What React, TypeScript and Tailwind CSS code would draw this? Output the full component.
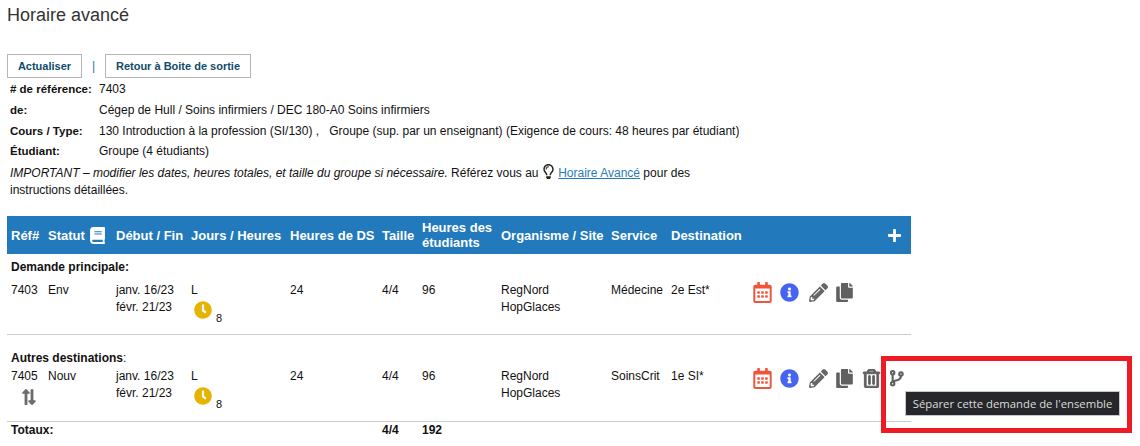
import { FaBook, FaClock, FaCopy, FaInfoCircle, FaLongArrowAltDown, FaLongArrowAltUp, FaPencilAlt, FaPlus, FaRegCalendarAlt, FaRegLightbulb, FaRegTrashAlt } from "react-icons/fa";

const headers = ["Réf#", "Statut", "Début / Fin", "Jours / Heures", "Heures de DS", "Taille", "Heures des étudiants", "Organisme / Site", "Service", "Destination"];
const widths = ["w-[37px]", "w-[68px]", "w-[75px]", "w-[99px]", "w-[92px]", "w-[40px]", "w-[79px]", "w-[110px]", "w-[60px]", "w-[81px]", "w-[163px]"];

function BranchIcon() {
  return (
    <svg width="14" height="18" viewBox="0 0 16 19" fill="none" stroke="#5f5f5f" strokeWidth="2.4" className="ml-[1px]">
      <circle cx="3" cy="3.5" r="2" />
      <circle cx="3" cy="16" r="2" />
      <circle cx="12.5" cy="5" r="2" />
      <path d="M3 5.5v8.5M12.500 7c0 3.500-2 4.500-4.500 5-2.500.5-4.500 1-5 2" />
    </svg>
  );
}

function Row({ id, status, service, dest, extra }: { id: string; status: string; service: string; dest: string; extra?: boolean }) {
  return (
    <tr className="align-top">
      <td className="pl-1">
        {id}
        {extra && (
          <div className="flex ml-[6px] mt-[3px] text-[#6b6b6b] text-[18px]">
            <FaLongArrowAltUp className="-mr-[12px]" />
            <FaLongArrowAltDown />
          </div>
        )}
      </td>
      <td className="pl-1">{status}</td>
      <td className="pl-1">
        janv. 16/23
        <br />
        févr. 21/23
      </td>
      <td className="pl-1">
        L
        <div className="flex ml-[3px] mt-[2px]">
          <FaClock className="text-[#e6b400] text-[18px]" />
          <span className="mt-[10px] ml-[4px] text-[11px] leading-[14px]">8</span>
        </div>
      </td>
      <td className="pl-1">24</td>
      <td className="pl-1">4/4</td>
      <td className="pl-1">96</td>
      <td className="pl-1">
        RegNord
        <br />
        HopGlaces
      </td>
      <td className="pl-1">{service}</td>
      <td className="pl-1">{dest}</td>
      <td className="pl-1">
        <div className="flex items-center gap-[8px]">
          <FaRegCalendarAlt className="text-[#f0553a] text-[21px]" />
          <FaInfoCircle className="text-[#4564f0] text-[19px] -ml-[1px]" />
          <FaPencilAlt className="text-[#666666] text-[19px] ml-[2px]" />
          <FaCopy className="text-[#606060] text-[19px] -ml-[1px]" />
          {extra && <FaRegTrashAlt className="text-[#606060] text-[19px] stroke-[24px]" />}
          {extra && <BranchIcon />}
        </div>
      </td>
    </tr>
  );
}

export default function App() {
  return (
    <div className="relative h-[446px] w-[1140px] overflow-hidden bg-white text-[12px] leading-[17px] text-[#111111] font-['Liberation_Sans',sans-serif]">
      <div className="px-[7px]">
        <h1 className="pt-[4px] text-[18px] leading-[22px] text-[#333333]">Horaire avancé</h1>

        {/* Buttons */}
        <div className="flex items-center mt-[28px] h-[24px]">
          <button className="h-[24px] w-[75px] border border-[#b5b5b5] text-[11px] font-bold text-[#0f4c6b]">Actualiser</button>
          <span className="w-[23px] text-center text-[#2277bb]">|</span>
          <button className="h-[24px] w-[146px] border border-[#b5b5b5] text-[11px] font-bold text-[#0f4c6b]">Retour à Boite de sortie</button>
        </div>

        {/* Details */}
        <div className="mt-[1px] pl-[3px]">
          <div className="flex h-[21px] items-center">
            <b className="w-[89px] shrink-0 text-[11.5px]"># de référence:</b>
            <span>7403</span>
          </div>
          <div className="flex h-[21px] items-center">
            <b className="w-[89px] shrink-0 text-[11.5px]">de:</b>
            <span>Cégep de Hull / Soins infirmiers / DEC 180-A0 Soins infirmiers</span>
          </div>
          <div className="flex h-[20px] items-center">
            <b className="w-[89px] shrink-0 text-[11.5px]">Cours / Type:</b>
            <span className="whitespace-pre">130 Introduction à la profession (SI/130) ,   Groupe (sup. par un enseignant) (Exigence de cours: 48 heures par étudiant)</span>
          </div>
          <div className="flex h-[20px] items-center">
            <b className="w-[89px] shrink-0 text-[11.5px]">Étudiant:</b>
            <span>Groupe (4 étudiants)</span>
          </div>
          <p className="mt-[4px] w-[700px]">
            <i>IMPORTANT – modifier les dates, heures totales, et taille du groupe si nécessaire.</i> <span>Référez vous au</span>{" "}
            <FaRegLightbulb className="inline text-[15px] -mt-[5px] -mx-[1px] text-[#222222]" />{" "}
            <a className="text-[#2a7ab8] underline">Horaire Avancé</a> <span>pour des</span>
            <br />
            <span>instructions détaillées.</span>
          </p>
        </div>

        {/* Table */}
        <table className="mt-[17px] w-[904px] table-fixed border-collapse">
          <colgroup>
            {widths.map((w, i) => (
              <col key={i} className={w} />
            ))}
          </colgroup>
          <thead>
            <tr className="h-[38px] bg-[#2279bb] text-left text-[13px] leading-[15px] font-bold text-white">
              {headers.map((h) => (
                <th key={h} className="pl-1">
                  {h === "Statut" ? (
                    <span className="flex items-center gap-[4px]">
                      {h} <FaBook className="text-[17px]" />
                    </span>
                  ) : (
                    h
                  )}
                </th>
              ))}
              <th className="pr-[9px] text-right">
                <FaPlus className="inline text-[15px]" />
              </th>
            </tr>
          </thead>
          <tbody>
            <tr>
              <td colSpan={11} className="pl-1 pt-[5px] pb-[6px] font-bold">
                Demande principale:
              </td>
            </tr>
            <Row id="7403" status="Env" service="Médecine" dest="2e Est*" />
            <tr className="border-b border-[#cccccc]">
              <td colSpan={11} className="h-[9px]" />
            </tr>
            <tr>
              <td colSpan={11} className="pl-1 pt-[15px] pb-[1px]">
                <b>Autres destinations</b>:
              </td>
            </tr>
            <Row id="7405" status="Nouv" service="SoinsCrit" dest="1e SI*" extra />
            <tr className="border-b border-[#cccccc]">
              <td colSpan={11} className="h-[11px]" />
            </tr>
            <tr className="font-bold">
              <td colSpan={5} className="pl-1">Totaux:</td>
              <td className="pl-1">4/4</td>
              <td className="pl-1">192</td>
              <td colSpan={4} />
            </tr>
          </tbody>
        </table>
      </div>

      {/* Highlight frame and tooltip */}
      <div className="absolute left-[881px] top-[356px] h-[77px] w-[251px] border-[5px] border-[#ed1c24]" />
      <div className="absolute left-[905px] top-[391px] h-[25px] w-[215px] border border-[#c8c8cc] bg-[#26272b] text-center text-[11.3px] leading-[23px] text-[#dcdcdc] font-['Open_Sans',sans-serif]">
        Séparer cette demande de l'ensemble
      </div>
    </div>
  );
}
